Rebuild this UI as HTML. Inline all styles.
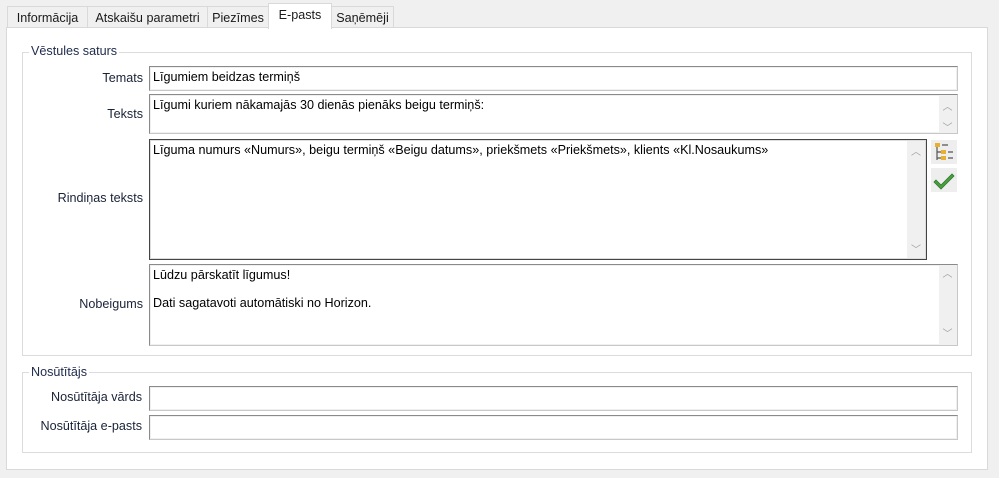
<!DOCTYPE html>
<html><head><meta charset="utf-8"><style>
*{box-sizing:border-box;margin:0;padding:0}
body{width:999px;height:478px;background:#f0f0f0;font-family:"Liberation Sans",sans-serif;font-size:12.6px;color:#000;position:relative;overflow:hidden}
.tab{position:absolute;top:6px;height:22px;border:1px solid #d9d9d9;border-bottom:none;background:#f0f0f0;padding:4px 0 0 0;text-align:center;color:#1a1a1a}
.tab.sel{top:3px;height:26px;background:#fff;border-color:#d9d9d9;z-index:2}
.panel{position:absolute;left:6px;top:27px;width:982px;height:443px;background:#fff;border:1px solid #d9d9d9}
.grp{position:absolute;border:1px solid #dcdcdc}
.legend{position:absolute;background:#fff;padding:0 2px;color:#1e2a4a}
.lbl{position:absolute;text-align:right;color:#1a2238;width:130px}
.inp{position:absolute;background:#fff;border:1px solid #8a8a8a;border-color:#8a8a8a #c8c8c8 #c8c8c8 #8a8a8a;box-shadow:inset 0 0 0 1px #f0f0f0;padding:3px 3px;color:#000;white-space:pre}
.sb{position:absolute;top:1px;right:1px;bottom:1px;width:17px;background:#f0f0f0;color:#a0a0a0;font-size:10px;text-align:center}
.btn{position:absolute;width:26px;height:24px;background:#eee;}
</style></head><body>
<div class="tab" style="left:7px;width:81px">Informācija</div>
<div class="tab" style="left:87px;width:121px">Atskaišu parametri</div>
<div class="tab" style="left:207px;width:62px">Piezīmes</div>
<div class="tab sel" style="left:268px;width:64px">E-pasts</div>
<div class="tab" style="left:331px;width:63px">Saņēmēji</div>
<div class="panel"></div>

<div class="grp" style="left:22px;top:52px;width:950px;height:304px"></div>
<div class="legend" style="left:29px;top:44px">Vēstules saturs</div>

<div class="lbl" style="left:13px;top:71px">Temats</div>
<div class="inp" style="left:149px;top:66px;width:809px;height:25px">Līgumiem beidzas termiņš</div>

<div class="lbl" style="left:13px;top:107px">Teksts</div>
<div class="inp" style="left:149px;top:94px;width:809px;height:40px">Līgumi kuriem nākamajās 30 dienās pienāks beigu termiņš:<div class="sb"><div style="margin-top:2px">︿</div><div style="margin-top:6px">﹀</div></div></div>

<div class="lbl" style="left:13px;top:191px">Rindiņas teksts</div>
<div class="inp" style="left:149px;top:139px;width:778px;height:121px;border:1px solid #444;box-shadow:inset 0 0 0 1px #ddd">Līguma numurs «Numurs», beigu termiņš «Beigu datums», priekšmets «Priekšmets», klients «Kl.Nosaukums»<div class="sb" style="width:18px"><div style="margin-top:2px">︿</div><div style="position:absolute;bottom:2px;width:100%">﹀</div></div></div>
<div class="btn" style="left:931px;top:140px"><svg width="26" height="24"><rect x="4" y="3" width="5" height="4" fill="#e8b030"/><path d="M6 7v13M6 12h5M6 18h5" stroke="#555" stroke-width="1.2" fill="none"/><rect x="10" y="10" width="5" height="4" fill="#e8b030"/><rect x="10" y="16" width="5" height="4" fill="#e8b030"/><path d="M11 5h6M17 12h5M17 18h5" stroke="#555" stroke-width="1.3"/></svg></div>
<div class="btn" style="left:931px;top:168px"><svg width="26" height="24"><path d="M5 12l5 5 11-11 2 2-13 13-7-7z" fill="#4aa040" stroke="#2f7a2a" stroke-width="0.8"/></svg></div>

<div class="lbl" style="left:13px;top:297px">Nobeigums</div>
<div class="inp" style="left:149px;top:264px;width:809px;height:82px;line-height:14px">Lūdzu pārskatīt līgumus!

Dati sagatavoti automātiski no Horizon.<div class="sb"><div style="margin-top:2px">︿</div><div style="position:absolute;bottom:2px;width:100%">﹀</div></div></div>

<div class="grp" style="left:22px;top:372px;width:950px;height:81px"></div>
<div class="legend" style="left:29px;top:365px">Nosūtītājs</div>
<div class="lbl" style="left:12px;top:390px">Nosūtītāja vārds</div>
<div class="inp" style="left:149px;top:386px;width:809px;height:25px"></div>
<div class="lbl" style="left:12px;top:419px">Nosūtītāja e-pasts</div>
<div class="inp" style="left:149px;top:415px;width:809px;height:25px"></div>
</body></html>
